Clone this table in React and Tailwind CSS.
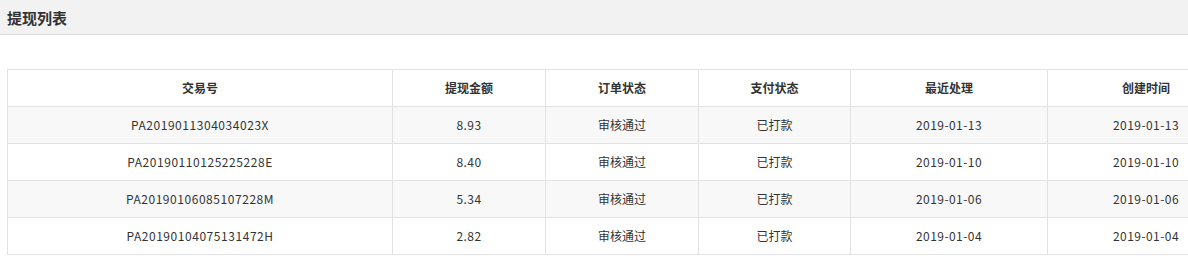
import React from "react";

const rows = [
  { no: "PA2019011304034023X", amount: "8.93", order: "审核通过", pay: "已打款", last: "2019-01-13", created: "2019-01-13" },
  { no: "PA20190110125225228E", amount: "8.40", order: "审核通过", pay: "已打款", last: "2019-01-10", created: "2019-01-10" },
  { no: "PA20190106085107228M", amount: "5.34", order: "审核通过", pay: "已打款", last: "2019-01-06", created: "2019-01-06" },
  { no: "PA20190104075131472H", amount: "2.82", order: "审核通过", pay: "已打款", last: "2019-01-04", created: "2019-01-04" },
];

const heads = ["交易号", "提现金额", "订单状态", "支付状态", "最近处理", "创建时间"];

const font = { fontFamily: '"Noto Sans CJK SC", "Open Sans", sans-serif' };

const Cell = ({ children, className = "" }) => (
  <div
    className={`h-[37px] flex items-center justify-center border-r border-b border-[#e2e2e2] text-[12px] text-[#333] ${className}`}
  >
    {children}
  </div>
);

export default function App() {
  return (
    <div className="w-[1188px] h-[256px] overflow-hidden bg-white" style={font}>
      <div className="h-[35px] bg-[#f2f2f2] border-b border-[#dcdcdc] flex items-center px-[7px]">
        <h2 className="text-[15px] font-bold text-[#333] leading-none">提现列表</h2>
      </div>

      <div className="mt-[34px] ml-[7px] w-[1238px] border-l border-t border-[#e2e2e2] grid grid-cols-[385px_153px_153px_152px_197px_197px]">
        {heads.map((h) => (
          <Cell key={h} className="font-bold bg-white">
            {h}
          </Cell>
        ))}
        {rows.map((r, i) => {
          const bg = i % 2 === 0 ? "bg-[#f8f8f8]" : "bg-white";
          return (
            <React.Fragment key={r.no}>
              <Cell className={`${bg} tracking-[0.55px]`}>{r.no}</Cell>
              <Cell className={`${bg} tracking-[0.45px]`}>{r.amount}</Cell>
              <Cell className={bg}>{r.order}</Cell>
              <Cell className={bg}>{r.pay}</Cell>
              <Cell className={`${bg} tracking-[0.45px]`}>{r.last}</Cell>
              <Cell className={`${bg} tracking-[0.45px]`}>{r.created}</Cell>
            </React.Fragment>
          );
        })}
      </div>
    </div>
  );
}
